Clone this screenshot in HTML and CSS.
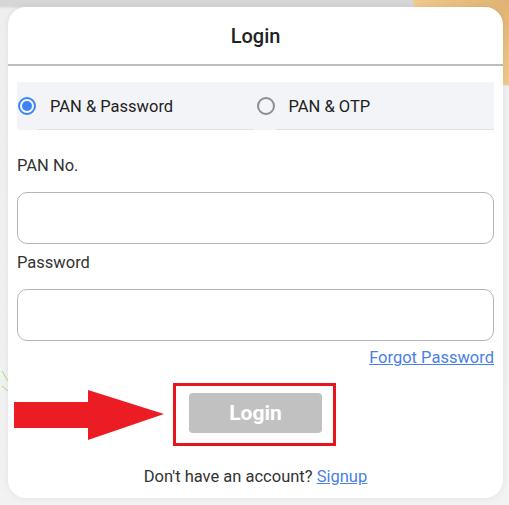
FILE: index.html
```html
<!DOCTYPE html>
<html>
<head>
<meta charset="utf-8">
<link rel="stylesheet" href="styles.css">
</head>
<body>
<div class="page">
  <div class="card">
    <div class="card-head">Login</div>
    <div class="card-body">
      <div class="mode-row">
        <label class="mode">
          <span class="radio radio-on"></span>
          <span class="mode-text">PAN &amp; Password</span>
        </label>
        <label class="mode">
          <span class="radio"></span>
          <span class="mode-text">PAN &amp; OTP</span>
        </label>
      </div>
      <div class="field-label first">PAN No.</div>
      <div class="input"></div>
      <div class="field-label">Password</div>
      <div class="input"></div>
      <div class="forgot-row"><a class="link">Forgot Password</a></div>
      <div class="btn-row">
        <div class="highlight">
          <div class="btn">Login</div>
        </div>
      </div>
      <div class="signup">Don't have an account? <a class="link">Signup</a></div>
    </div>
  </div>
  <svg class="arrow" width="152" height="52" viewBox="0 0 152 52">
    <polygon points="0,12 74,12 74,0 150,24 74,50 74,38 0,38" fill="#ec1c24"/>
  </svg>
  <svg class="deco-green" width="10" height="26" viewBox="0 0 10 26">
    <path d="M2 1 L8 11 M2 16 L8 21" stroke="#9be07a" stroke-width="1" fill="none"/>
  </svg>
</div>
</body>
</html>
```
FILE: styles.css
```css
html, body {
  margin: 0;
  padding: 0;
}
body {
  width: 509px;
  height: 505px;
  overflow: hidden;
  font-family: Roboto, "Liberation Sans", sans-serif;
  background: linear-gradient(180deg, #d6d6d6 0px, #d6d6d6 6px, #efefef 9px, #f2f2f2 100%);
}
.page {
  position: relative;
  width: 509px;
  height: 505px;
  padding: 7px 6px 0 8px;
  box-sizing: border-box;
  background: radial-gradient(ellipse 160px 140px at 525px -12px, #dcae6e 0%, #f0c98c 70%, rgba(240,201,140,0) 71%);
}
.card {
  width: 495px;
  height: 491px;
  background: #fff;
  border-radius: 18px;
  box-shadow: 0 0 6px rgba(0,0,0,0.08);
  display: flex;
  flex-direction: column;
}
.card-head {
  height: 56px;
  border-bottom: 2px solid #bdbdbd;
  display: flex;
  align-items: center;
  justify-content: center;
  font-size: 20px;
  font-weight: 500;
  color: #222;
  padding-top: 1px;
  box-sizing: content-box;
}
.card-body {
  padding: 16px 9px 0 9px;
  display: flex;
  flex-direction: column;
}
.mode-row {
  display: flex;
  height: 48px;
  background: #f3f4f8;
}
.mode {
  flex: 1;
  display: flex;
  align-items: center;
  position: relative;
}
.mode::after {
  content: "";
  position: absolute;
  left: 20px;
  right: 0;
  bottom: 0;
  height: 1px;
  background: #e2e3e8;
}
.mode:first-child::after {
  right: 2px;
}
.radio {
  width: 18px;
  height: 18px;
  box-sizing: border-box;
  border: 2px solid #8d8d8d;
  border-radius: 50%;
  margin-left: 1px;
  margin-right: 14px;
  flex: none;
  position: relative;
}
.radio-on {
  border-color: #3d85f5;
}
.radio-on::after {
  content: "";
  position: absolute;
  left: 2px;
  top: 2px;
  width: 10px;
  height: 10px;
  border-radius: 50%;
  background: #3d85f5;
}
.mode-text {
  font-size: 16.5px;
  color: #222;
}
.field-label {
  font-size: 16.5px;
  color: #333;
  height: 19px;
  line-height: 19px;
  margin-top: 9px;
  margin-bottom: 17px;
}
.field-label.first {
  margin-top: 26px;
}
.input {
  height: 52px;
  box-sizing: border-box;
  border: 1px solid #b4b4b4;
  border-radius: 10px;
}
.forgot-row {
  display: flex;
  justify-content: flex-end;
  margin-top: 7px;
  height: 20px;
  line-height: 20px;
}
.link {
  color: #4a80e8;
  text-decoration: underline;
  font-size: 16.5px;
}
.btn-row {
  display: flex;
  justify-content: center;
  margin-top: 15px;
  padding-right: 2px;
}
.highlight {
  border: 3px solid #e8141e;
  padding: 7px 11px 10px 13px;
}
.btn {
  width: 133px;
  height: 40px;
  border-radius: 4px;
  background: #c1c1c1;
  color: #fff;
  font-weight: 700;
  font-size: 21px;
  display: flex;
  align-items: center;
  justify-content: center;
}
.signup {
  text-align: center;
  font-size: 16.5px;
  color: #333;
  margin-top: 21px;
  line-height: 19px;
}
.arrow {
  position: absolute;
  left: 14px;
  top: 390px;
}
.deco-green {
  position: absolute;
  left: 0;
  top: 370px;
}
```
